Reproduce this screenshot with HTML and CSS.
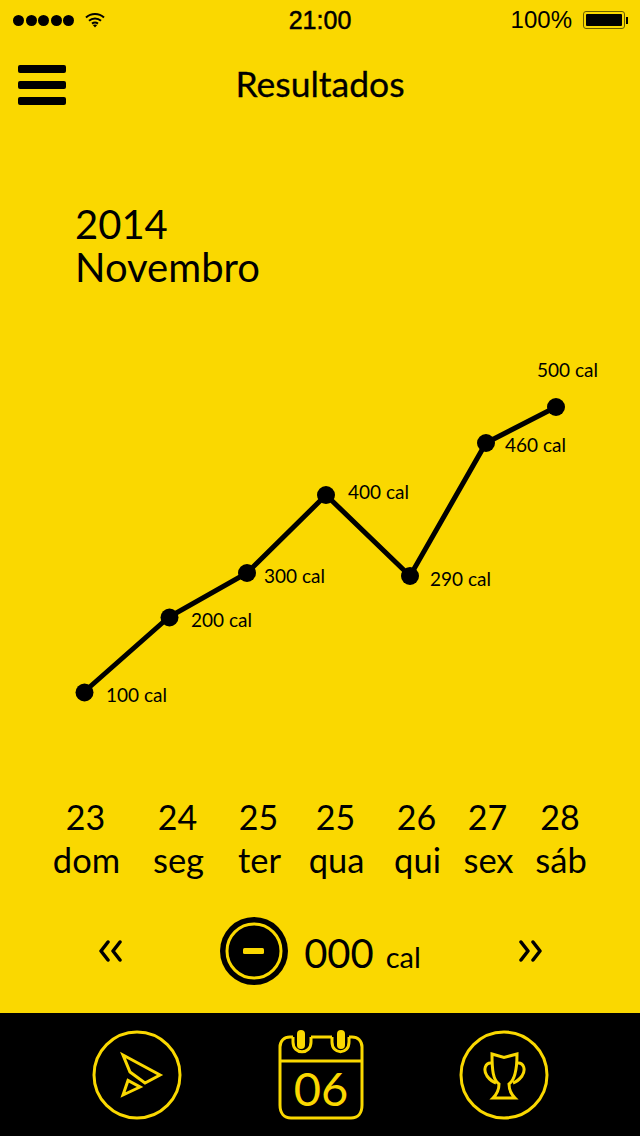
FILE: index.html
```html
<!DOCTYPE html>
<html lang="pt">
<head>
<meta charset="utf-8">
<title>Resultados</title>
<link rel="stylesheet" href="styles.css">
</head>
<body>
<div class="screen">
  <div class="status">
    <div class="status-left">
      <div class="signal"><i></i><i></i><i></i><i></i><i></i></div>
      <svg class="wifi" width="20" height="16" viewBox="0 0 20 16"><path d="M1 5.500C6 0.800 14 0.800 19 5.500M4 8.700C7.400 5.600 12.600 5.600 16 8.700M7 11.600C8.800 10.200 11.200 10.200 13 11.600" fill="none" stroke="#000" stroke-width="2"/><path d="M10 15.500L7.800 13.100C9 12.200 11 12.200 12.200 13.100Z" fill="#000"/></svg>
    </div>
    <div class="status-time">21:00</div>
    <div class="status-right">
      <span class="pct">100%</span>
      <div class="battery"><div class="battery-fill"></div></div>
      <div class="battery-tip"></div>
    </div>
  </div>

  <header class="header">
    <div class="burger"><i></i><i></i><i></i></div>
    <h1 class="title">Resultados</h1>
  </header>

  <div class="period">
    <div>2014</div>
    <div>Novembro</div>
  </div>

  <svg class="chart" width="640" height="390" viewBox="0 340 640 390">
    <polyline points="84,692 169,617 247,573 326,495 410,576 486,443 556,407" fill="none" stroke="#000" stroke-width="5"/>
    <g fill="#000">
      <circle cx="84.500" cy="692.500" r="9"/><circle cx="169.500" cy="617.500" r="9"/><circle cx="247" cy="573" r="9"/><circle cx="326" cy="495" r="9"/><circle cx="410" cy="576" r="9"/><circle cx="486" cy="443" r="9"/><circle cx="556" cy="407" r="9"/>
    </g>
    <g class="chart-label">
      <text x="106" y="702">100 cal</text>
      <text x="191" y="627">200 cal</text>
      <text x="264" y="583">300 cal</text>
      <text x="348" y="499">400 cal</text>
      <text x="430" y="586">290 cal</text>
      <text x="505" y="452">460 cal</text>
      <text x="537" y="377">500 cal</text>
    </g>
  </svg>

  <div class="days">
    <div class="day"><span class="day-num">23</span><span class="day-name">dom</span></div>
    <div class="day"><span class="day-num">24</span><span class="day-name">seg</span></div>
    <div class="day"><span class="day-num">25</span><span class="day-name">ter</span></div>
    <div class="day"><span class="day-num">25</span><span class="day-name">qua</span></div>
    <div class="day"><span class="day-num">26</span><span class="day-name">qui</span></div>
    <div class="day"><span class="day-num">27</span><span class="day-name">sex</span></div>
    <div class="day"><span class="day-num">28</span><span class="day-name">sáb</span></div>
  </div>

  <div class="entry">
    <svg class="chev" width="24" height="22" viewBox="0 0 24 22"><path d="M10 2L3 11L10 20M22 2L15 11L22 20" fill="none" stroke="#000" stroke-width="3.500" stroke-linecap="round" stroke-linejoin="round"/></svg>
    <div class="entry-mid">
      <svg width="68" height="68" viewBox="0 0 68 68"><circle cx="34" cy="34" r="34" fill="#000"/><circle cx="34" cy="34" r="27" fill="#000" stroke="#FAD800" stroke-width="3"/><rect x="23" y="31" width="21" height="6" rx="1.500" fill="#FAD800"/></svg>
      <div class="amount"><span class="amount-num">000</span><span class="amount-unit">cal</span></div>
    </div>
    <svg class="chev" width="24" height="22" viewBox="0 0 24 22"><path d="M2 2L9 11L2 20M14 2L21 11L14 20" fill="none" stroke="#000" stroke-width="3.500" stroke-linecap="round" stroke-linejoin="round"/></svg>
  </div>

  <nav class="tabs">
    <svg width="90" height="90" viewBox="0 0 90 90" fill="none" stroke="#FAD800" stroke-width="3"><circle cx="45" cy="45" r="43"/><path d="M31 25L68 45L53 53L38 42Z"/><path d="M31 65L36 50.500L48 57Z"/></svg>
    <svg width="86" height="90" viewBox="0 0 86 90" fill="none" stroke="#FAD800" stroke-width="3"><path d="M15 7H12C6 7 2 11 2 17V75C2 83 6 88 13 88H73C80 88 84 83 84 75V17C84 11 80 7 74 7H71M33 7H54"/><path d="M15 7V12C15 25 33 25 33 12V7M54 7V12C54 25 71 25 71 12V7M2 31H84"/><rect x="19" y="0" width="8" height="19" rx="4" fill="#FAD800" stroke="none"/><rect x="59" y="0" width="8" height="19" rx="4" fill="#FAD800" stroke="none"/><text class="cal-num" x="43" y="76" text-anchor="middle">06</text></svg>
    <svg width="90" height="90" viewBox="0 0 90 90" fill="none" stroke="#FAD800" stroke-width="3"><circle cx="45" cy="45" r="43"/><path d="M33 24L45 27.500L58 24C58 40 56 50 50 54C50 60 52 64 56 68H34C38 64 40 60 40 54C34 50 33 40 33 24Z"/><path d="M33 33C26 32 24 40 28 46C31 50 34 52 37 53M58 33C65 32 67 40 63 46C60 50 57 52 54 53"/></svg>
  </nav>
</div>
</body>
</html>
```
FILE: styles.css
```css
* { box-sizing: border-box; }
html, body { margin: 0; padding: 0; }
body { width: 640px; height: 1136px; overflow: hidden; background: #FAD800; }
.screen { width: 640px; height: 1136px; display: flex; flex-direction: column; font-family: Lato, sans-serif; color: #000; }

.status { height: 40px; position: relative; display: flex; align-items: center; justify-content: space-between; padding: 0 12px 0 13px; font-family: "Liberation Sans", sans-serif; flex: none; }
.status-left { display: flex; align-items: center; gap: 11px; }
.signal { display: flex; gap: 1.500px; }
.signal i { width: 11px; height: 11px; border-radius: 50%; background: #000; display: block; }
.status-time { position: absolute; left: 0; right: 0; text-align: center; font-size: 25px; font-weight: 400; -webkit-text-stroke: 0.5px #000; }
.status-right { display: flex; align-items: center; }
.pct { font-size: 24px; margin-right: 11px; }
.battery { width: 42px; height: 18px; border: 1px solid #6b5d00; border-radius: 3px; padding: 2px; }
.battery-fill { width: 100%; height: 100%; background: #000; border-radius: 1px; }
.battery-tip { width: 2px; height: 7px; background: #000; margin-left: 1px; }

.header { height: 90px; flex: none; display: flex; align-items: center; justify-content: center; position: relative; }
.burger { position: absolute; left: 18px; top: 25px; width: 48px; display: flex; flex-direction: column; gap: 8px; }
.burger i { height: 8px; background: #000; border-radius: 2px; display: block; }
.title { margin: -2px 0 0; font-size: 35.500px; font-weight: 400; line-height: 1; -webkit-text-stroke: 0.3px #000; }

.period { margin: 73px 0 0 75px; font-size: 40px; line-height: 42.500px; flex: none; }

.chart { display: block; flex: none; margin-top: 52px; }
.chart-label text { font-family: Lato, sans-serif; font-size: 19px; fill: #000; }

.days { display: grid; grid-template-columns: 93px 91px 71px 83px 79px 63px 82px; margin: 65px 0 0 40px; flex: none; }
.day { display: flex; flex-direction: column; align-items: center; font-size: 34px; line-height: 44px; }
.day-num { padding-right: 2px; line-height: 43px; }
.day-name { font-size: 34.500px; }

.entry { flex: none; display: flex; align-items: center; justify-content: space-between; height: 68px; margin-top: 35px; padding: 0 97px 0 98px; }
.entry-mid { display: flex; align-items: center; gap: 16px; }
.amount { display: flex; align-items: baseline; gap: 12px; padding-top: 3px; }
.amount-num { font-size: 40px; }
.amount-unit { font-size: 29px; }

.tabs { flex: 1; background: #000; margin-top: 28px; display: flex; align-items: center; justify-content: space-between; padding: 0 91px 0 92px; }
.cal-num { font-family: Lato, sans-serif; font-size: 47px; fill: #FAD800; stroke: none; }
```
